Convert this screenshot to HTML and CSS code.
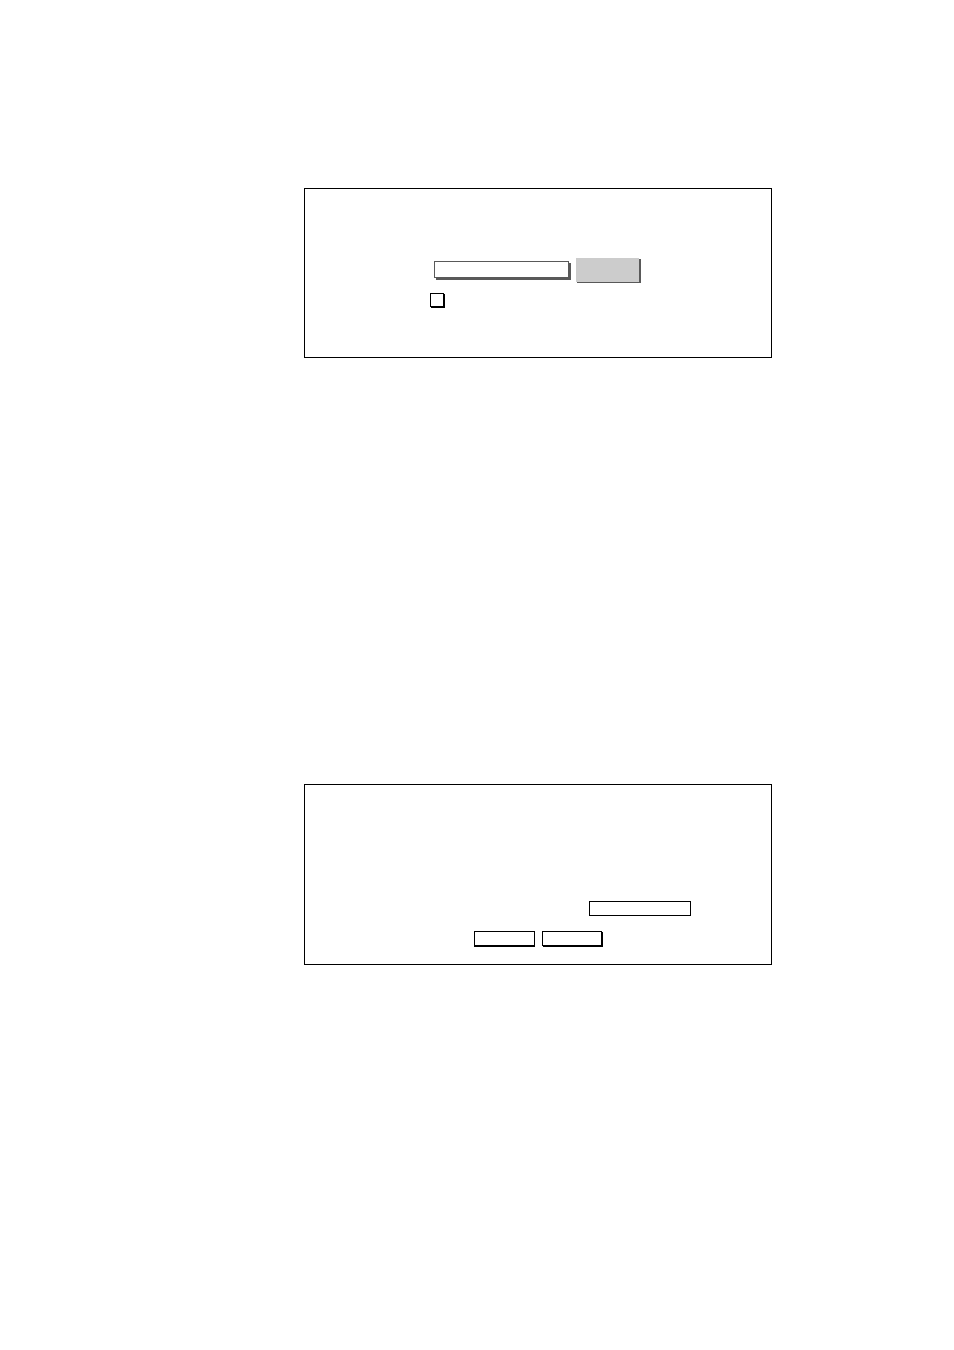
FILE: index.html
```html
<!DOCTYPE html>
<html lang="en">
<head>
    <meta charset="UTF-8">
    <title>Forms</title>
    <link rel="stylesheet" href="styles.css">
</head>
<body>
    <main class="page">
        <!-- search form -->
        <form class="frame search-form">
            <div class="search-row">
                <input type="text" class="search-field" aria-label="Search">
                <button type="button" class="search-button" aria-label="Search"></button>
            </div>
            <input type="checkbox" class="check" aria-label="Option">
        </form>
        <!-- entry form -->
        <form class="frame entry-form">
            <input type="text" class="entry-field" aria-label="Value">
            <div class="actions">
                <button type="button" class="action submit" aria-label="Submit"></button>
                <button type="reset" class="action reset" aria-label="Reset"></button>
            </div>
        </form>
    </main>
</body>
</html>
```

FILE: styles.css
```css
* {
    box-sizing: border-box;
}
body {
    background: #fff;
    font-family: "Liberation Sans", Arial, sans-serif;
    margin: 0;
}
input,
button {
    appearance: none;
    background: #fff;
    border: 1px solid #000;
    border-radius: 0;
    display: block;
    font: inherit;
    font-size: 12px;
    margin: 0;
    padding: 0;
}
.page {
    display: flex;
    flex-direction: column;
    gap: 426px;
    padding: 188px 182px 0 304px;
}
.frame {
    border: 1px solid #000;
}
.search-form {
    padding: 69px 0 50px 125px;
}
.search-row {
    display: flex;
    align-items: center;
    gap: 7px;
    margin-bottom: 11px;
    padding-left: 4px;
}
.search-field {
    border-color: #595959;
    box-shadow: 2px 2px #595959;
    height: 17px;
    margin-bottom: 1px;
    width: 135px;
}
.search-button {
    background: #ccc;
    border: none;
    box-shadow: 1px 1px #595959, 2px 1px #595959;
    height: 24px;
    width: 63px;
}
.check {
    box-shadow: 1px 1px #000;
    height: 14px;
    width: 14px;
}
.entry-form {
    padding: 116px 0 18px 169px;
}
.entry-field {
    height: 15px;
    margin: 0 0 15px 115px;
    width: 102px;
}
.actions {
    display: flex;
    gap: 7px;
}
.action {
    height: 15px;
}
.submit {
    box-shadow: 0 1px #000;
    width: 61px;
}
.reset {
    box-shadow: 1px 1px #000;
    width: 60px;
}
```
